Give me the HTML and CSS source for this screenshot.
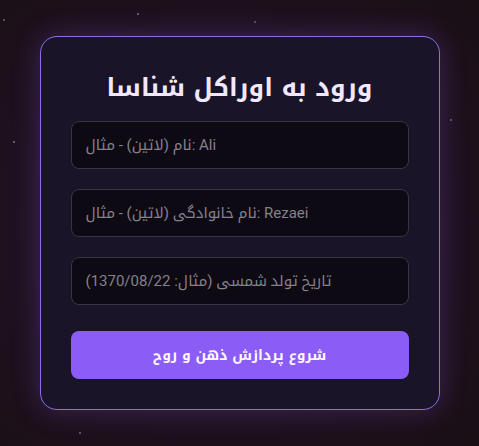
FILE: index.html
```html
<!DOCTYPE html>
<html lang="fa">
<head>
<meta charset="UTF-8">
<meta name="viewport" content="width=device-width, initial-scale=1.0">
<title>ورود به اوراکل شناسا</title>
<link rel="stylesheet" href="styles.css">
</head>
<body>
<div class="card">
    <h1>ورود به اوراکل شناسا</h1>
    <form id="login-form">
        <input type="text" class="field" placeholder="نام (لاتین) - مثال: Ali">
        <input type="text" class="field" placeholder="نام خانوادگی (لاتین) - مثال: Rezaei">
        <input type="text" class="field" placeholder="تاریخ تولد شمسی (مثال: 1370/08/22)">
        <button type="button" class="start-btn">شروع پردازش ذهن و روح</button>
    </form>
</div>
</body>
</html>
```

FILE: styles.css
```css
body {
    font-family: Roboto, "Noto Kufi Arabic", sans-serif;
    display: flex;
    justify-content: center;
    align-items: center;
    height: 100vh;
    margin: 0;
    overflow: hidden;
    background-color: #1a0f17;
    background-image:
        radial-gradient(circle at 14px 142px, #6a5a7a 0, #6a5a7a 1px, transparent 1.5px),
        radial-gradient(circle at 138px 14px, #6a5a7a 0, #6a5a7a 1px, transparent 1.5px),
        radial-gradient(circle at 255px 22px, #5a4a6a 0, #5a4a6a 1px, transparent 1.5px),
        radial-gradient(circle at 451px 120px, #5a4a6a 0, #5a4a6a 1px, transparent 1.5px),
        radial-gradient(circle at 80px 433px, #5a4a6a 0, #5a4a6a 1px, transparent 1.5px),
        radial-gradient(circle at 4px 20px, #5a4a6a 0, #5a4a6a 1px, transparent 1.5px),
        radial-gradient(ellipse at 45% 50%, #2c1838 0%, #1f1120 55%, #1a0f15 100%);
}
.card {
    width: 338px;
    padding: 30px;
    text-align: center;
    background-color: #1a1428;
    border: 1px solid #8f6ce8;
    border-radius: 17px;
    box-shadow: 0 0 28px rgba(139, 92, 246, 0.28);
}
h1 {
    margin: 0 0 12px;
    font-family: "Noto Kufi Arabic", sans-serif;
    font-size: 25px;
    line-height: 42px;
    font-weight: 700;
    color: #f1e8ff;
}
#login-form {
    display: flex;
    flex-direction: column;
    gap: 20px;
}
.field {
    box-sizing: border-box;
    height: 48px;
    padding: 0 14px;
    font-family: Roboto, "Noto Kufi Arabic", sans-serif;
    font-size: 15px;
    color: #ddd;
    background-color: #0d0a14;
    border: 1px solid #3a3444;
    border-radius: 8px;
    outline: none;
    text-align: left;
}
.field::placeholder {
    color: #85808c;
}
.start-btn {
    margin-top: 6px;
    height: 48px;
    font-family: "Noto Kufi Arabic", sans-serif;
    font-size: 14px;
    font-weight: 700;
    color: #fbf7ff;
    background-color: #8b5cf6;
    border: none;
    border-radius: 8px;
    cursor: pointer;
}
```
